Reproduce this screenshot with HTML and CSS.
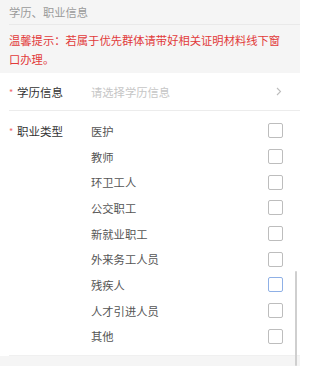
FILE: index.html
```html
<!DOCTYPE html>
<html lang="zh-CN">
<head>
<meta charset="utf-8">
<title>学历、职业信息</title>
<link rel="stylesheet" href="styles.css">
</head>
<body>
<div class="page">
  <div class="top">
    <div class="title">学历、职业信息</div>
    <div class="notice">温馨提示：若属于优先群体请带好相关证明材料线下窗口办理。</div>
  </div>
  <div class="form">
    <div class="row row-select">
      <div class="label"><span class="star">*</span>学历信息</div>
      <div class="value placeholder">请选择学历信息</div>
      <svg class="chev" width="6" height="9" viewBox="0 0 6 9"><path d="M1 1l3.5 3.5L1 8" fill="none" stroke="#bdbdbd" stroke-width="1.1"/></svg>
    </div>
    <div class="row row-check">
      <div class="label"><span class="star">*</span>职业类型</div>
      <ul class="options">
        <li class="opt"><span>医护</span><i class="box"></i></li>
        <li class="opt"><span>教师</span><i class="box"></i></li>
        <li class="opt"><span>环卫工人</span><i class="box"></i></li>
        <li class="opt"><span>公交职工</span><i class="box"></i></li>
        <li class="opt"><span>新就业职工</span><i class="box"></i></li>
        <li class="opt"><span>外来务工人员</span><i class="box"></i></li>
        <li class="opt"><span>残疾人</span><i class="box focus"></i></li>
        <li class="opt"><span>人才引进人员</span><i class="box"></i></li>
        <li class="opt"><span>其他</span><i class="box"></i></li>
      </ul>
    </div>
  </div>
  <div class="bottom"></div>
  <div class="scrollbar"></div>
</div>
</body>
</html>
```
FILE: styles.css
```css
html, body {
  margin: 0;
  padding: 0;
  background: #ffffff;
}
body {
  font-family: "Noto Sans CJK SC", "Noto Sans", sans-serif;
  font-size: 11.3px;
}
.page {
  position: relative;
  width: 300px;
  height: 366px;
  overflow: hidden;
}
.top {
  background: #f5f5f5;
  padding-left: 9px;
}
.title {
  height: 24px;
  line-height: 24px;
  color: #9a9a9a;
  border-bottom: 1px solid #e9e9e9;
}
.notice {
  color: #e23a3a;
  line-height: 19px;
  padding: 6px 12px 4px 0;
}
.form {
  background: #fff;
  padding-left: 9px;
}
.row {
  display: flex;
}
.row-select {
  height: 37px;
  align-items: center;
  border-bottom: 1px solid #ececec;
  padding-right: 18px;
}
.label {
  width: 82px;
  flex: none;
  color: #333;
  font-size: 11.5px;
  display: flex;
  align-items: center;
}
.star {
  color: #f06a6a;
  width: 8px;
  font-size: 9px;
  line-height: 1;
  position: relative;
  top: 1px;
}
.value {
  flex: 1;
}
.placeholder {
  color: #c6c6c6;
}
.chev {
  display: block;
}
.row-check {
  padding-top: 7px;
  padding-bottom: 6px;
  align-items: flex-start;
  border-bottom: 1px solid #f0f0f0;
}
.row-check .label {
  height: 25.7px;
}
.options {
  list-style: none;
  margin: 0;
  padding: 0 17px 0 0;
  flex: 1;
}
.opt {
  height: 25.7px;
  display: flex;
  align-items: center;
  justify-content: space-between;
  color: #555;
}
.box {
  display: block;
  width: 13px;
  height: 13px;
  border: 1px solid #bdbdbd;
  border-radius: 2px;
  background: #fff;
}
.box.focus {
  border-color: #8fb0e6;
}
.bottom {
  height: 12px;
  background: #f5f5f5;
}
.scrollbar {
  position: absolute;
  left: 295px;
  top: 271px;
  width: 2px;
  height: 95px;
  background: #cfcfcf;
  border-radius: 1px;
}
```
